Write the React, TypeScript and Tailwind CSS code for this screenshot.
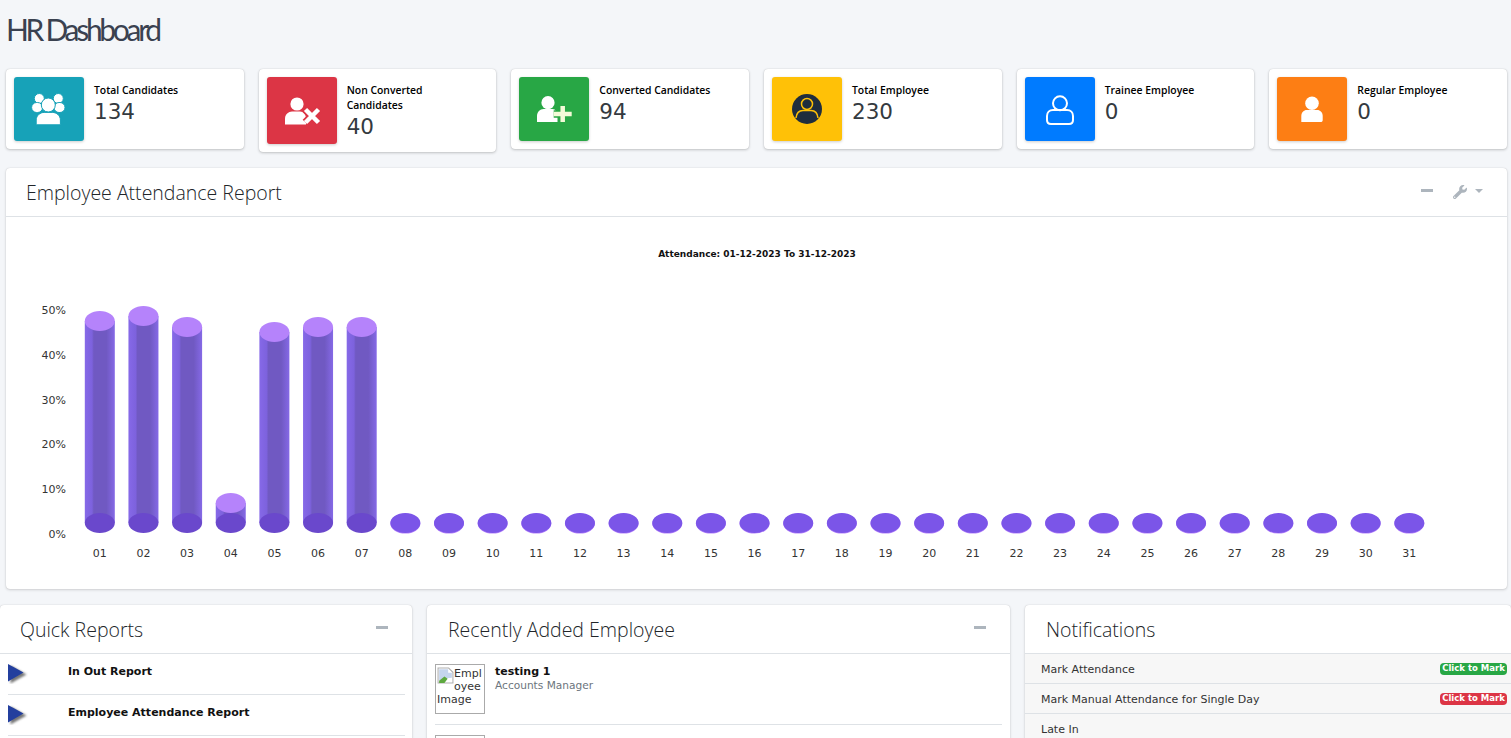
import type { ReactNode } from 'react';
import { FaWrench } from 'react-icons/fa';

const days = Array.from({ length: 31 }, (_, i) => String(i + 1).padStart(2, '0'));

const barTops: Record<number, number> = { 0: 104, 1: 99, 2: 110, 3: 286, 4: 115, 5: 110, 6: 110 };

function AttendanceChart() {
  const baseY = 306;
  return (
    <svg viewBox="0 0 1501 372" className="block w-full h-[372px] font-['DejaVu_Sans',sans-serif]">
      <defs>
        <linearGradient id="barBody" x1="0" x2="1" y1="0" y2="0">
          <stop offset="0" stopColor="#8669e8" />
          <stop offset="0.24" stopColor="#7d62dd" />
          <stop offset="0.3" stopColor="#7059c2" />
          <stop offset="0.72" stopColor="#7059c2" />
          <stop offset="1" stopColor="#8569e6" />
        </linearGradient>
      </defs>
      <text x="751" y="40" textAnchor="middle" fontSize="9" fontWeight="700" fill="#111">
        Attendance: 01-12-2023 To 31-12-2023
      </text>
      {[0, 10, 20, 30, 40, 50].map((v, i) => (
        <text key={v} x="60" y={321 - i * 44.8} textAnchor="end" fontSize="11" fill="#333">
          {v}%
        </text>
      ))}
      {days.map((d, i) => {
        const cx = 93.8 + i * 43.65;
        const top = barTops[i];
        return (
          <g key={d}>
            {top !== undefined ? (
              <>
                <rect x={cx - 15} y={top} width="30" height={baseY - top} fill="url(#barBody)" />
                <ellipse cx={cx} cy={baseY} rx="15" ry="10" fill="#6a48cc" />
                <ellipse cx={cx} cy={top} rx="15" ry="10" fill="#b583fb" />
              </>
            ) : (
              <>
                <ellipse cx={cx} cy={baseY + 0.6} rx="15" ry="10" fill="#b583fb" />
                <ellipse cx={cx} cy={baseY} rx="15" ry="10" fill="#7b55e8" />
              </>
            )}
            <text x={cx} y="340" textAnchor="middle" fontSize="11" fill="#333">
              {d}
            </text>
          </g>
        );
      })}
    </svg>
  );
}

function UsersIcon() {
  return (
    <svg width="40" height="36" viewBox="0 0 40 36" fill="#fff" stroke="#17a2b8" strokeWidth="1">
      <circle cx="10.3" cy="7.5" r="5" />
      <circle cx="29.3" cy="7.5" r="5" />
      <rect x="2.6" y="11.5" width="11" height="10" rx="5" />
      <rect x="25" y="11.5" width="11" height="10" rx="5" />
      <circle cx="19.3" cy="14" r="7" />
      <path d="M7.2 33.8V29c0-4.5 4-7.6 8-7.6h8.2c4 0 8 3.1 8 7.6v4.8z" />
    </svg>
  );
}

function PersonX() {
  return (
    <svg width="40" height="36" viewBox="0 0 40 36">
      <circle cx="15" cy="11" r="6.6" fill="#fff" />
      <path d="M3 31.5v-6c0-4 3.5-7 7-7h8c3.5 0 6 3 6 7v6z" fill="#fff" />
      <path d="M23.5 16.5l13 13m0-13l-13 13" stroke="#dc3545" strokeWidth="8" />
      <path d="M23.5 16.5l13 13m0-13l-13 13" stroke="#fff" strokeWidth="4.5" />
    </svg>
  );
}

function PersonPlus() {
  return (
    <svg width="40" height="36" viewBox="0 0 40 36">
      <circle cx="14" cy="11.7" r="6.6" fill="#fff" />
      <path d="M3 31v-6c0-4 3-7 6.5-7h9c3 0 5 3 5 7v6z" fill="#fff" />
      <path d="M28.7 15v16M19.7 23h18" stroke="#28a745" strokeWidth="7.5" />
      <path d="M28.7 15v16M19.7 23h18" stroke="#f4fbd8" strokeWidth="4.5" />
    </svg>
  );
}

function PersonCircle() {
  return (
    <svg width="40" height="36" viewBox="0 0 40 36">
      <circle cx="20" cy="18" r="15" fill="#1f2d3d" />
      <circle cx="20" cy="13" r="5.5" fill="#1f2d3d" stroke="#ffc107" strokeWidth="1.5" />
      <path d="M9 27c.5-5 3.5-7.500 7-7.500h8c3.500 0 6.500 2.500 7 7.500" fill="#1f2d3d" stroke="#ffc107" strokeWidth="1.5" />
    </svg>
  );
}

function PersonOutline() {
  return (
    <svg width="40" height="36" viewBox="0 0 40 36" fill="none" stroke="#fff" strokeWidth="2">
      <circle cx="20" cy="12.3" r="7" />
      <path d="M13 19h14c3.500 0 6 2.500 6 6v4c0 2.500-1.500 4-4 4H11c-2.500 0-4-1.500-4-4v-4c0-3.500 2.500-6 6-6z" />
    </svg>
  );
}

function PersonSolid() {
  return (
    <svg width="40" height="36" viewBox="0 0 40 36" fill="#fff">
      <circle cx="20" cy="12.3" r="6.8" />
      <path d="M9.300 31v-6c0-3.500 2.500-6 5.500-6h10.400c3 0 5.500 2.500 5.500 6v4c0 1.500-.8 2-2 2z" />
    </svg>
  );
}

const statCards = [
  { title: 'Total Candidates', value: '134', color: 'bg-[#17a2b8]', icon: <UsersIcon /> },
  { title: 'Non Converted Candidates', value: '40', color: 'bg-[#dc3545]', icon: <PersonX /> },
  { title: 'Converted Candidates', value: '94', color: 'bg-[#28a745]', icon: <PersonPlus /> },
  { title: 'Total Employee', value: '230', color: 'bg-[#ffc107]', icon: <PersonCircle /> },
  { title: 'Trainee Employee', value: '0', color: 'bg-[#007bff]', icon: <PersonOutline /> },
  { title: 'Regular Employee', value: '0', color: 'bg-[#fd7e14]', icon: <PersonSolid /> },
];

function StatCard({ title, value, color, icon }: { title: string; value: string; color: string; icon: ReactNode }) {
  return (
    <div className="flex bg-white rounded-[4px] p-2 shadow-[0_0_1px_rgba(0,0,0,0.2),0_1px_3px_rgba(0,0,0,0.2)]">
      <div className={`${color} w-[70px] min-h-[64px] shrink-0 rounded-[3px] flex items-center justify-center shadow-[0_1px_3px_rgba(0,0,0,0.2)]`}>
        {icon}
      </div>
      <div className="pl-[10px] pr-[20px] pt-[6px] pb-[3px]">
        <div className="font-['Open_Sans',sans-serif] font-semibold text-[10.4px] leading-[15px] text-black">{title}</div>
        <div className="font-['DejaVu_Sans',sans-serif] text-[21.5px] leading-[28px] text-[#343a40]">{value}</div>
      </div>
    </div>
  );
}

function CollapseBar() {
  return <div className="w-[12px] h-[3px] bg-[#adb5bd] mb-[3px]" />;
}

function Panel({ title, action, pad, children }: { title: string; action?: ReactNode; pad: string; children?: ReactNode }) {
  return (
    <div className="bg-white rounded-[4px] shadow-[0_0_1px_rgba(0,0,0,0.2),0_1px_3px_rgba(0,0,0,0.15)] overflow-hidden">
      <div className={`flex items-center justify-between h-[49px] border-b border-[#dee2e6] ${pad}`}>
        <h3 className="font-['Open_Sans',sans-serif] font-light text-[19.5px] pt-[2px] text-[#212529]">{title}</h3>
        {action}
      </div>
      {children}
    </div>
  );
}

function BlueArrow() {
  return (
    <svg width="20" height="20" viewBox="0 0 20 20" className="block shrink-0">
      <defs>
        <filter id="arrowBlur" x="-30%" y="-30%" width="160%" height="160%">
          <feGaussianBlur stdDeviation="0.8" />
        </filter>
      </defs>
      <path d="M1 1l16 9-16 9z" fill="#777" filter="url(#arrowBlur)" transform="translate(1.5 .5)" />
      <path d="M0 0l15.5 8.5L0 17.5z" fill="#233f9e" />
    </svg>
  );
}

function BrokenImage() {
  return (
    <div className="w-[50px] h-[50px] shrink-0 border border-[#aaa] p-[1px] pt-[2px] overflow-hidden text-[11px] leading-[13px] break-all text-[#333]">
      <svg width="17" height="17" viewBox="0 0 16 16" className="float-left">
        <path d="M1 1h10l4 4v10H1z" fill="#fff" stroke="#b0b0b0" />
        <path d="M2 2h8.500v3.500H14V10L9 10.500 2 13z" fill="#c5d5ee" />
        <path d="M2 15v-2l5-4 3 2-3 4z" fill="#5da83f" />
      </svg>
      Employee Image
    </div>
  );
}

const reports = ['In Out Report', 'Employee Attendance Report'];
const employees = [
  { name: 'testing 1', role: 'Accounts Manager' },
  { name: 'testing 2', role: 'Accounts Manager' },
];
const notifications = [
  { label: 'Mark Attendance', badge: 'bg-[#28a745]' },
  { label: 'Mark Manual Attendance for Single Day', badge: 'bg-[#dc3545]' },
  { label: 'Late In' },
];

export default function App() {
  return (
    <div className="h-[738px] overflow-hidden bg-[#f4f6f9] font-['DejaVu_Sans',sans-serif] text-[11px]">
      <div className="pl-[6px] pr-[4px]">
        <h1 className="h-[69px] pt-[9px] font-['Lato',sans-serif] text-[30px] leading-[40px] tracking-[-3.3px] text-[#3a4150]">
          HR Dashboard
        </h1>

        <div className="grid grid-cols-6 gap-[15px] items-start h-[83px]">
          {statCards.map(c => (
            <StatCard key={c.title} {...c} />
          ))}
        </div>

        <div className="mt-[16px]">
          <Panel
            title="Employee Attendance Report"
            pad="pl-[20px] pr-[24px]"
            action={
              <div className="flex items-center gap-[20px]">
                <CollapseBar />
                <div className="flex items-center gap-[8px]">
                  <FaWrench size={14} className="text-[#adb5bd]" />
                  <span className="w-0 h-0 border-x-[4px] border-x-transparent border-t-[4px] border-t-[#adb5bd] mb-[2px]" />
                </div>
              </div>
            }
          >
            <AttendanceChart />
          </Panel>
        </div>
      </div>

      <div className="grid grid-cols-[412px_583px_486px] gap-[15px] mt-[16px]">
        <Panel title="Quick Reports" pad="pl-[20px] pr-[24px]" action={<CollapseBar />}>
          <div className="pl-[8px] pr-[7px]">
            {reports.map(r => (
              <div key={r} className="flex h-[41px] pt-[10px] border-b border-[#dee2e6]">
                <BlueArrow />
                <span className="ml-[40px] pt-[1px] font-bold text-[11px] leading-[14px] text-[#111]">{r}</span>
              </div>
            ))}
          </div>
        </Panel>

        <Panel title="Recently Added Employee" pad="pl-[21px] pr-[24px]" action={<CollapseBar />}>
          <div className="pl-[8px] pr-[8px] pt-[10px]">
            {employees.map(e => (
              <div key={e.name} className="flex gap-[10px] pb-[10px] mb-[10px] border-b border-[#dee2e6]">
                <BrokenImage />
                <div className="pt-[1px]">
                  <div className="font-bold text-[11px] leading-[14px] text-[#111]">{e.name}</div>
                  <div className="text-[10.6px] leading-[13px] text-[#6c757d]">{e.role}</div>
                </div>
              </div>
            ))}
          </div>
        </Panel>

        <Panel title="Notifications" pad="pl-[21px]">
          <div>
            {notifications.map(n => (
              <div key={n.label} className="flex items-center justify-between h-[30px] pl-[16px] pr-[4px] bg-[#f7f7f7] border-b border-[#dee2e6]">
                <span className="pt-[3px] text-[11px] text-[#333]">{n.label}</span>
                {n.badge && (
                  <span className={`${n.badge} rounded-[4px] w-[67px] h-[12px] flex items-center justify-center text-white font-bold text-[8.5px]`}>
                    Click to Mark
                  </span>
                )}
              </div>
            ))}
          </div>
        </Panel>
      </div>
    </div>
  );
}
